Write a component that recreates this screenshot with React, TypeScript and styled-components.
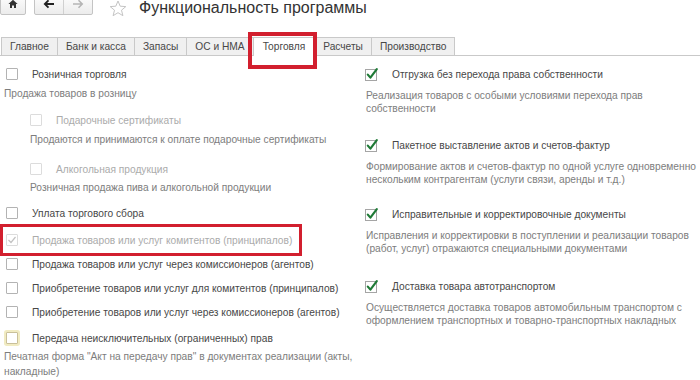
import { createGlobalStyle, styled } from "styled-components";

const GlobalStyle = createGlobalStyle`
  html, body {
    margin: 0;
    padding: 0;
    background: #fff;
  }
  body {
    font-family: "Liberation Sans", Arial, sans-serif;
  }
`;

const Page = styled.div`
  width: 700px;
  height: 380px;
  overflow: hidden;
  background: #fff;
  color: #444;
  font-size: 10.2px;
`;

const TopBar = styled.div`
  display: flex;
  align-items: flex-end;
  height: 26px;
  margin-top: -8px;
`;

const ToolButton = styled.div<{ $width: number }>`
  display: flex;
  align-items: center;
  justify-content: center;
  width: ${(p) => p.$width}px;
  height: 23px;
  margin-bottom: 3px;
  box-sizing: border-box;
  border: 1px solid #c4c4c4;
  border-radius: 2px;
  background: linear-gradient(#ffffff, #ececec);
`;

const NavGroup = styled.div`
  display: flex;
  margin-left: 8px;
  margin-bottom: 3px;
  height: 23px;
  box-sizing: border-box;
  border: 1px solid #c4c4c4;
  border-radius: 2px;
  background: linear-gradient(#ffffff, #ececec);
`;

const NavHalf = styled.div<{ $divider?: boolean }>`
  width: 28px;
  display: flex;
  align-items: center;
  justify-content: center;
  border-left: ${(p) => (p.$divider ? "1px solid #d0d0d0" : "none")};
`;

const StarIcon = styled.svg`
  margin-left: 16px;
  margin-bottom: 1px;
`;

const Title = styled.div`
  margin-left: 12px;
  font-size: 16px;
  line-height: 18px;
  margin-bottom: 1px;
  color: #333;
`;

const TabStrip = styled.div`
  display: flex;
  margin-top: 19px;
  padding-left: 1px;
  border-bottom: 1px solid #c9c9c9;
  height: 18px;
`;

const Tab = styled.div<{ $active?: boolean }>`
  position: relative;
  height: ${(p) => (p.$active ? 19 : 18)}px;
  box-sizing: border-box;
  padding: 0 ${(p) => (p.$active ? 9 : 8)}px;
  margin-right: -1px;
  line-height: 17px;
  color: #474747;
  background: ${(p) => (p.$active ? "#fff" : "#f0f0f0")};
  border: 1px solid #c9c9c9;
  border-bottom: none;
  z-index: ${(p) => (p.$active ? 1 : 0)};

  ${(p) =>
    p.$active &&
    `
    &::after {
      content: "";
      position: absolute;
      left: -6px;
      right: -3px;
      top: -6px;
      bottom: -13px;
      border: 4px solid #d21f2e;
    }
  `}
`;

const Content = styled.div`
  display: grid;
  grid-template-columns: 365px 1fr;
  padding-top: 7px;
`;

const Column = styled.div`
  display: flex;
  flex-direction: column;
  align-items: flex-start;
`;

const Row = styled.div<{ $mt?: number; $indent?: number; $gap?: number; $marked?: boolean }>`
  position: relative;
  display: flex;
  align-items: center;
  height: 22px;
  margin-top: ${(p) => p.$mt ?? 0}px;
  padding-left: ${(p) => p.$indent ?? 0}px;
  gap: ${(p) => p.$gap ?? 14}px;
  white-space: nowrap;

  ${(p) =>
    p.$marked &&
    `
    &::after {
      content: "";
      position: absolute;
      left: 0;
      top: -5px;
      bottom: -5px;
      width: 302px;
      box-sizing: border-box;
      border: 3px solid #d21f2e;
    }
  `}
`;

const Label = styled.span<{ $disabled?: boolean }>`
  color: ${(p) => (p.$disabled ? "#ababab" : "#474747")};
`;

const Desc = styled.div<{ $mt?: number; $indent?: number; $lh?: number }>`
  margin-top: ${(p) => p.$mt ?? 0}px;
  padding-left: ${(p) => p.$indent ?? 0}px;
  line-height: ${(p) => p.$lh ?? 14}px;
  color: #7d7d7d;
  white-space: nowrap;
`;

const Box = styled.span<{ $disabled?: boolean; $focused?: boolean }>`
  display: inline-flex;
  align-items: center;
  justify-content: center;
  width: 12px;
  height: 12px;
  box-sizing: border-box;
  background: #fff;
  border: 1px solid ${(p) => (p.$disabled ? "#dcdcdc" : p.$focused ? "#c9c09a" : "#b3b3b3")};
  border-radius: 1px;
  box-shadow: ${(p) => (p.$focused ? "0 0 0 2px #f1ebc2" : "none")};
`;

const CheckBox = ({
  checked,
  disabled,
  focused,
}: {
  checked?: boolean;
  disabled?: boolean;
  focused?: boolean;
}) => (
  <Box $disabled={disabled} $focused={focused}>
    {checked && (
      <svg width="10" height="10" viewBox="0 0 10 10">
        <path d="M1.5 5 L4 7.5 L8.5 2" fill="none" stroke="#c2c2c2" strokeWidth="1.2" />
      </svg>
    )}
  </Box>
);

const GreenCheck = () => (
  <svg width="14" height="14" viewBox="0 0 14 14">
    <rect x="0.5" y="2.5" width="11" height="11" fill="#fff" stroke="#a5a5a5" />
    <path
      d="M2.8 7.6 L5.4 10.6 L11.8 2.2"
      fill="none"
      stroke="#1f7a36"
      strokeWidth="2.2"
      strokeLinecap="round"
      strokeLinejoin="round"
    />
  </svg>
);

const leftOptions = [
  { label: "Продажа товаров или услуг через комиссионеров (агентов)" },
  { label: "Приобретение товаров или услуг для комитентов (принципалов)" },
  { label: "Приобретение товаров или услуг через комиссионеров (агентов)" },
];

const rightOptions = [
  {
    label: "Отгрузка без перехода права собственности",
    lines: ["Реализация товаров с особыми условиями перехода прав", "собственности"],
    mt: 0,
  },
  {
    label: "Пакетное выставление актов и счетов-фактур",
    lines: [
      "Формирование актов и счетов-фактур по одной услуге одновременно",
      "нескольким контрагентам (услуги связи, аренды и т.д.)",
    ],
    mt: 19,
  },
  {
    label: "Исправительные и корректировочные документы",
    lines: [
      "Исправления и корректировки в поступлении и реализации товаров",
      "(работ, услуг) отражаются специальными документами",
    ],
    mt: 17,
  },
  {
    label: "Доставка товара автотранспортом",
    lines: [
      "Осуществляется доставка товаров автомобильным транспортом с",
      "оформлением транспортных и товарно-транспортных накладных",
    ],
    mt: 20,
  },
];

const tabs = ["Главное", "Банк и касса", "Запасы", "ОС и НМА", "Торговля", "Расчеты", "Производство"];

export default function App() {
  return (
    <Page>
      <GlobalStyle />
      <TopBar>
        <ToolButton $width={26}>
          <svg width="10" height="10" viewBox="0 0 10 10">
            <path d="M5 0.8 L9.6 5 H8 V9 H6 V6.5 H4 V9 H2 V5 H0.4 Z" fill="#333" />
          </svg>
        </ToolButton>
        <NavGroup>
          <NavHalf>
            <svg width="12" height="10" viewBox="0 0 12 10">
              <path d="M11 5 H2 M5.5 1.3 L1.8 5 L5.5 8.7" fill="none" stroke="#222" strokeWidth="1.8" />
            </svg>
          </NavHalf>
          <NavHalf $divider>
            <svg width="12" height="10" viewBox="0 0 12 10">
              <path d="M1 5 H10 M6.5 1.3 L10.2 5 L6.5 8.7" fill="none" stroke="#b5b5b5" strokeWidth="1.6" />
            </svg>
          </NavHalf>
        </NavGroup>
        <StarIcon width="18" height="17" viewBox="0 0 18 17">
          <path
            d="M9 1 L11.2 6.2 L16.8 6.6 L12.5 10.2 L13.9 15.7 L9 12.7 L4.1 15.7 L5.5 10.2 L1.2 6.6 L6.8 6.2 Z"
            fill="none"
            stroke="#c4c4c4"
            strokeWidth="1"
            strokeLinejoin="round"
          />
        </StarIcon>
        <Title>Функциональность программы</Title>
      </TopBar>

      <TabStrip>
        {tabs.map((t) => (
          <Tab key={t} $active={t === "Торговля"}>
            {t}
          </Tab>
        ))}
      </TabStrip>

      <Content>
        <Column>
          <Row $indent={6}>
            <CheckBox />
            <Label>Розничная торговля</Label>
          </Row>
          <Desc $mt={2} $indent={4}>
            Продажа товаров в розницу
          </Desc>
          <Row $mt={8} $indent={30}>
            <CheckBox disabled />
            <Label $disabled>Подарочные сертификаты</Label>
          </Row>
          <Desc $mt={2} $indent={30}>
            Продаются и принимаются к оплате подарочные сертификаты
          </Desc>
          <Row $mt={11} $indent={30}>
            <CheckBox disabled />
            <Label $disabled>Алкогольная продукция</Label>
          </Row>
          <Desc $mt={1} $indent={30}>
            Розничная продажа пива и алкогольной продукции
          </Desc>
          <Row $mt={7} $indent={6}>
            <CheckBox />
            <Label>Уплата торгового сбора</Label>
          </Row>
          <Row $mt={5} $indent={6} $marked>
            <CheckBox checked disabled />
            <Label $disabled>Продажа товаров или услуг комитентов (принципалов)</Label>
          </Row>
          {leftOptions.map((o) => (
            <Row key={o.label} $mt={2} $indent={6}>
              <CheckBox />
              <Label>{o.label}</Label>
            </Row>
          ))}
          <Row $mt={4} $indent={6}>
            <CheckBox focused />
            <Label>Передача неисключительных (ограниченных) прав</Label>
          </Row>
          <Desc $indent={4} $lh={15}>
            Печатная форма "Акт на передачу прав" в документах реализации (акты,
            <br />
            накладные)
          </Desc>
        </Column>

        <Column>
          {rightOptions.map((o) => (
            <div key={o.label}>
              <Row $mt={o.mt} $gap={13}>
                <GreenCheck />
                <Label>{o.label}</Label>
              </Row>
              <Desc $mt={4} $indent={1} $lh={13}>
                {o.lines[0]}
                <br />
                {o.lines[1]}
              </Desc>
            </div>
          ))}
        </Column>
      </Content>
    </Page>
  );
}
